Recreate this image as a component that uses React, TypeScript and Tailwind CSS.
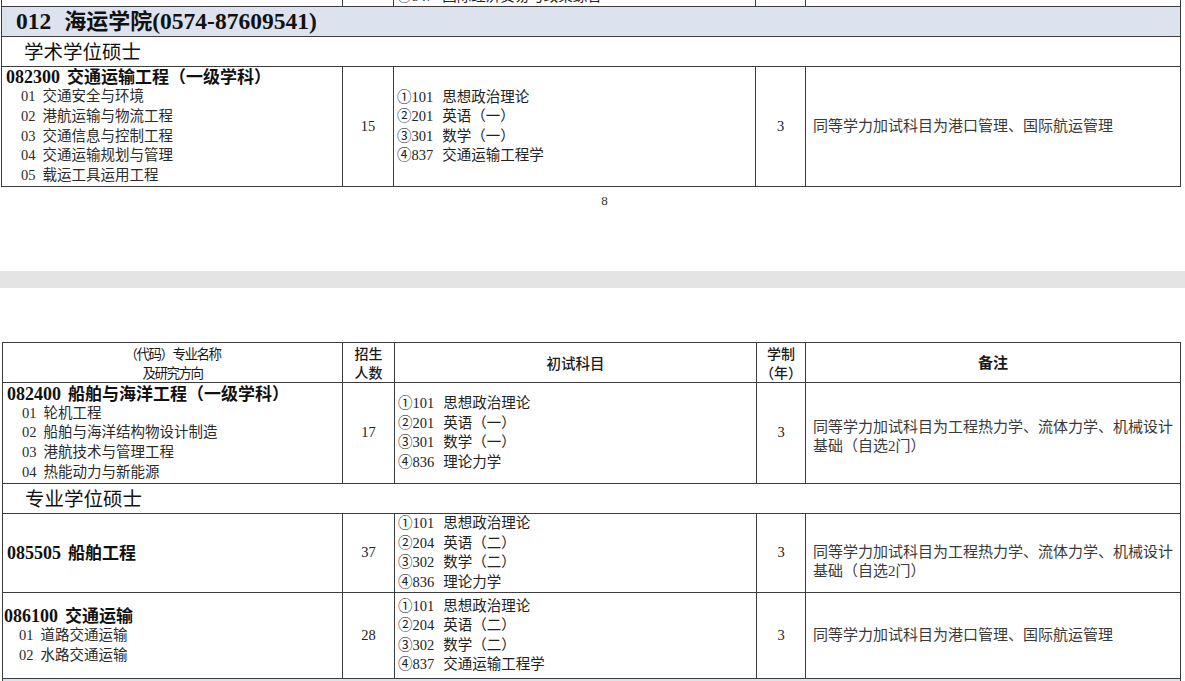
import React from "react";

type Major = {
  code: string;
  name: string;
  dirs: string[];
  count: string;
  subjects: string[];
  years: string;
  note: string[];
  notePad: string;
  h: string;
};

const page1: Major[] = [
  {
    code: "082300",
    name: "交通运输工程（一级学科）",
    dirs: ["01 交通安全与环境", "02 港航运输与物流工程", "03 交通信息与控制工程", "04 交通运输规划与管理", "05 载运工具运用工程"],
    count: "15",
    subjects: ["①101 思想政治理论", "②201 英语（一）", "③301 数学（一）", "④837 交通运输工程学"],
    years: "3",
    note: ["同等学力加试科目为港口管理、国际航运管理"],
    notePad: "pt-0",
    h: "h-[120px]",
  },
];

const academic2: Major = {
  code: "082400",
  name: "船舶与海洋工程（一级学科）",
  dirs: ["01 轮机工程", "02 船舶与海洋结构物设计制造", "03 港航技术与管理工程", "04 热能动力与新能源"],
  count: "17",
  subjects: ["①101 思想政治理论", "②201 英语（一）", "③301 数学（一）", "④836 理论力学"],
  years: "3",
  note: ["同等学力加试科目为工程热力学、流体力学、机械设计", "基础（自选2门）"],
  notePad: "pt-[7px]",
  h: "h-[101px]",
};

const professional: Major[] = [
  {
    code: "085505",
    name: "船舶工程",
    dirs: [],
    count: "37",
    subjects: ["①101 思想政治理论", "②204 英语（二）", "③302 数学（二）", "④836 理论力学"],
    years: "3",
    note: ["同等学力加试科目为工程热力学、流体力学、机械设计", "基础（自选2门）"],
    notePad: "pt-[18px]",
    h: "h-[79px]",
  },
  {
    code: "086100",
    name: "交通运输",
    dirs: ["01 道路交通运输", "02 水路交通运输"],
    count: "28",
    subjects: ["①101 思想政治理论", "②204 英语（二）", "③302 数学（二）", "④837 交通运输工程学"],
    years: "3",
    note: ["同等学力加试科目为港口管理、国际航运管理"],
    notePad: "pt-0",
    h: "h-[86px]",
  },
];

const td = "border border-[#3c3c3c] p-0 align-middle";

// "01 交通安全与环境" -> number + wider gap + text, as in the printed table
function Split({ text, gap }: { text: string; gap: string }) {
  const [num, ...rest] = text.split(" ");
  return (
    <>
      <span>{num}</span>
      <span className={gap}>{rest.join(" ")}</span>
    </>
  );
}

function MajorRow({ m, tight }: { m: Major; tight?: boolean }) {
  return (
    <tr className={m.h}>
      <td className={td}>
        <div className={tight ? "pl-[1px]" : "pl-[4px]"}>
          <div className="h-[20px] leading-[20px] font-bold text-[#111] whitespace-nowrap">
            <span className="text-[18px]">{m.code}</span>
            <span className="ml-[7px] text-[17px]">{m.name}</span>
          </div>
          {m.dirs.map((d) => (
            <div key={d} className="h-[19.7px] leading-[19.7px] pl-[15px] text-[14.5px] text-[#2b2b2b] whitespace-nowrap">
              <Split text={d} gap="ml-[7px]" />
            </div>
          ))}
        </div>
      </td>
      <td className={`${td} text-center text-[14.5px] text-[#222]`}>{m.count}</td>
      <td className={td}>
        <div className="pl-[3px]">
          {m.subjects.map((s) => (
            <div key={s} className="h-[19.5px] leading-[19.5px] text-[14.5px] text-[#222] whitespace-nowrap">
              <Split text={s} gap="ml-[9px]" />
            </div>
          ))}
        </div>
      </td>
      <td className={`${td} text-center text-[14.5px] text-[#222]`}>{m.years}</td>
      <td className={td}>
        <div className={`pl-[7px] ${m.notePad}`}>
          {m.note.map((n) => (
            <div key={n} className="h-[19px] leading-[19px] text-[15px] text-[#3a3a3a] whitespace-nowrap">
              {n}
            </div>
          ))}
        </div>
      </td>
    </tr>
  );
}

function CollegeBand({ text }: { text?: boolean }) {
  return (
    <tr className="h-[30px] bg-[#dce3ee]">
      <td colSpan={5} className={`${td} pl-[14px]`}>
        {text && (
          <span className="text-[23.5px] font-bold leading-[28px] text-[#111] whitespace-nowrap">
            012<span className="ml-[13px] text-[22px]">海运学院</span>(0574-87609541)
          </span>
        )}
      </td>
    </tr>
  );
}

function DegreeRow({ label }: { label: string }) {
  return (
    <tr className="h-[30px]">
      <td colSpan={5} className={`${td} pl-[22px]`}>
        <span className="font-['Noto_Sans_CJK_SC',sans-serif] text-[19.5px] leading-[28px] text-[#111]">{label}</span>
      </td>
    </tr>
  );
}

function Cols({ first }: { first: boolean }) {
  return first ? (
    <colgroup>
      <col className="w-[341px]" />
      <col className="w-[51px]" />
      <col className="w-[362px]" />
      <col className="w-[50px]" />
      <col className="w-[375px]" />
    </colgroup>
  ) : (
    <colgroup>
      <col className="w-[340px]" />
      <col className="w-[52px]" />
      <col className="w-[362px]" />
      <col className="w-[49px]" />
      <col className="w-[375px]" />
    </colgroup>
  );
}

export default function App() {
  return (
    <div className="w-[1185px] h-[681px] overflow-hidden bg-white font-['Liberation_Serif','Noto_Sans_CJK_SC',serif]">
      {/* previous page tail */}
      <div className="h-[187px] overflow-hidden">
        <table className="-mt-[14px] ml-px w-[1179px] table-fixed border-collapse">
          <Cols first />
          <tbody>
            <tr className="h-[20px]">
              <td className={td} />
              <td className={td} />
              <td className={td}>
                <div className="pl-[3px] text-[14.5px] leading-[19px] text-[#222] whitespace-nowrap">
                  <Split text="④847 国际经济贸易与政策综合" gap="ml-[9px]" />
                </div>
              </td>
              <td className={td} />
              <td className={td} />
            </tr>
            <CollegeBand text />
            <DegreeRow label="学术学位硕士" />
            {page1.map((m) => (
              <MajorRow key={m.code} m={m} />
            ))}
          </tbody>
        </table>
      </div>
      <div className="h-[84px] pt-[5px] pl-[24px] text-center text-[13px] leading-[18px] text-[#333]">8</div>

      {/* page gap */}
      <div className="h-[17px] bg-[#e4e4e4]" />
      <div className="h-[54px]" />

      <table className="ml-[2px] w-[1178px] table-fixed border-collapse">
        <Cols first={false} />
        <tbody>
          <tr className="h-[40px] text-[#1a1a1a]">
            <td className={`${td} text-center font-['Noto_Sans_CJK_SC',sans-serif] text-[13.5px] leading-[19px] tracking-[-1.5px]`}>
              <div>（代码）专业名称</div>
              <div>及研究方向</div>
            </td>
            <td className={`${td} text-center font-['Noto_Sans_CJK_SC',sans-serif] text-[14px] leading-[19px] font-medium`}>
              <div>招生</div>
              <div>人数</div>
            </td>
            <td className={`${td} text-center font-['Noto_Sans_CJK_SC',sans-serif] text-[14.5px] font-medium`}>初试科目</td>
            <td className={`${td} text-center font-['Noto_Sans_CJK_SC',sans-serif] text-[14px] leading-[19px] font-medium`}>
              <div>学制</div>
              <div>（年）</div>
            </td>
            <td className={`${td} text-center font-['Noto_Sans_CJK_SC',sans-serif] text-[15px] font-bold`}>备注</td>
          </tr>
          <MajorRow m={academic2} />
          <DegreeRow label="专业学位硕士" />
          <MajorRow m={professional[0]} />
          <MajorRow m={professional[1]} tight />
          <CollegeBand />
        </tbody>
      </table>
    </div>
  );
}
